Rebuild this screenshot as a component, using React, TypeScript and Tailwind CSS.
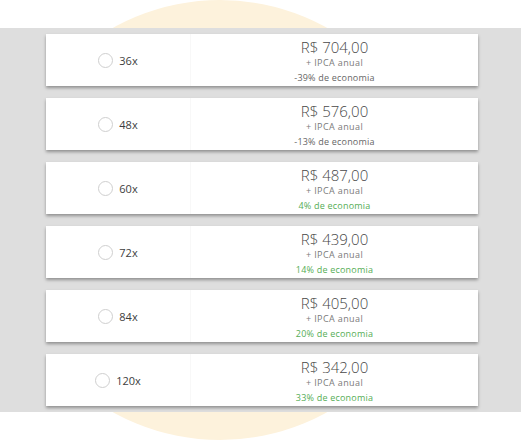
import React from 'react'

type Plan = {
    installments: string
    price: string
    saving: string
    positive: boolean
}

const plans: Plan[] = [
    { installments: '36x', price: 'R$ 704,00', saving: '-39% de economia', positive: false },
    { installments: '48x', price: 'R$ 576,00', saving: '-13% de economia', positive: false },
    { installments: '60x', price: 'R$ 487,00', saving: '4% de economia', positive: true },
    { installments: '72x', price: 'R$ 439,00', saving: '14% de economia', positive: true },
    { installments: '84x', price: 'R$ 405,00', saving: '20% de economia', positive: true },
    { installments: '120x', price: 'R$ 342,00', saving: '33% de economia', positive: true },
]

function PlanRow({ plan }: { plan: Plan }) {
    return (
        <label className="flex h-[52px] w-[432px] cursor-pointer bg-white shadow-[0_2px_3px_rgba(0,0,0,0.35)]">
            <div className="flex w-[144px] items-center justify-center gap-[6px] pt-[1px]">
                <span className="h-[15px] w-[15px] rounded-full border border-[#cfcfcf] bg-white" />
                <span className="text-[11px] leading-[14px] text-[#3d3d3d]">{plan.installments}</span>
            </div>
            <div className="flex flex-1 flex-col items-center border-l border-[#f8f8f8] pt-[3px]">
                <span className="text-[15px] font-light leading-[20px] text-[#484848]">{plan.price}</span>
                <span className="text-[9px] leading-[11px] tracking-[0.4px] text-[#7a7a7a]">+ IPCA anual</span>
                <span
                    className={
                        plan.positive
                            ? 'mt-[3px] text-[9px] leading-[14px] tracking-[0.2px] text-[#55ad55]'
                            : 'mt-[3px] text-[9px] leading-[14px] tracking-[0.2px] text-[#666]'
                    }
                >
                    {plan.saving}
                </span>
            </div>
        </label>
    )
}

export default function App() {
    return (
        <div
            className="relative h-[440px] w-[521px] overflow-hidden bg-white"
            style={{ fontFamily: '"Open Sans", "Noto Sans", sans-serif' }}
        >
            <div className="absolute left-0 top-0 h-[440px] w-[440px] rounded-full bg-[#fdf2dc]" />
            <div className="relative mt-[28px] flex flex-col gap-[12px] bg-[#dedede] pb-[6px] pl-[46px] pt-[6px]">
                {plans.map((plan) => (
                    <PlanRow key={plan.installments} plan={plan} />
                ))}
            </div>
        </div>
    )
}
